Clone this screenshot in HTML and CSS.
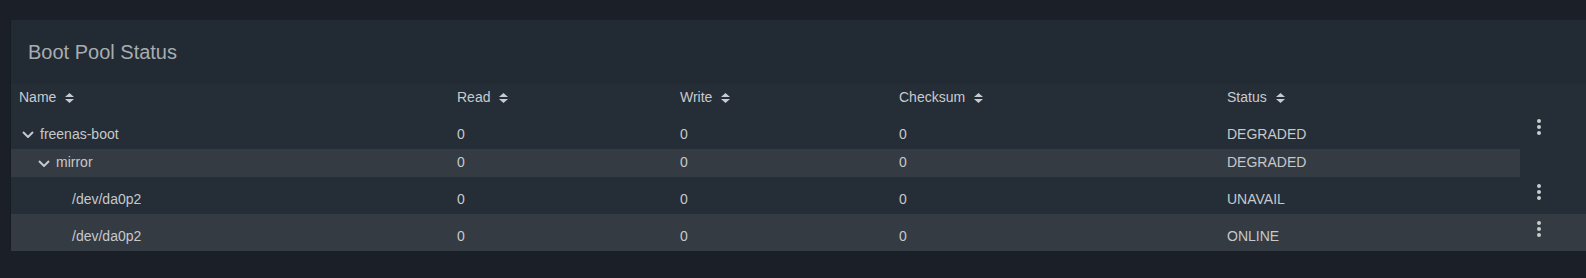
FILE: index.html
```html
<!DOCTYPE html>
<html>
<head>
<meta charset="utf-8">
<title>Boot Pool Status</title>
<link rel="stylesheet" href="styles.css">
</head>
<body>
<div class="page">
	<div class="card">
		<div class="card-title">
			<h3>Boot Pool Status</h3>
		</div>
		<div class="pool-table">
			<div class="row head">
				<div class="cell">Name <svg class="sort" viewBox="0 0 9 10"><polygon points="0,4 4.5,0 9,4"/><polygon points="0,6 4.5,10 9,6"/></svg></div>
				<div class="cell">Read <svg class="sort" viewBox="0 0 9 10"><polygon points="0,4 4.5,0 9,4"/><polygon points="0,6 4.5,10 9,6"/></svg></div>
				<div class="cell">Write <svg class="sort" viewBox="0 0 9 10"><polygon points="0,4 4.5,0 9,4"/><polygon points="0,6 4.5,10 9,6"/></svg></div>
				<div class="cell">Checksum <svg class="sort" viewBox="0 0 9 10"><polygon points="0,4 4.5,0 9,4"/><polygon points="0,6 4.5,10 9,6"/></svg></div>
				<div class="cell">Status <svg class="sort" viewBox="0 0 9 10"><polygon points="0,4 4.5,0 9,4"/><polygon points="0,6 4.5,10 9,6"/></svg></div>
				<div class="cell actions"></div>
			</div>

			<div class="row tall">
				<div class="cell name lvl-0"><span class="toggle"><svg viewBox="0 0 12 7"><polyline points="1,1 6,6 11,1"/></svg></span>freenas-boot</div>
				<div class="cell">0</div>
				<div class="cell">0</div>
				<div class="cell">0</div>
				<div class="cell">DEGRADED</div>
				<div class="cell actions"><svg class="more" viewBox="0 0 4 16"><circle cx="2" cy="2" r="2"/><circle cx="2" cy="8" r="2"/><circle cx="2" cy="14" r="2"/></svg></div>
			</div>

			<div class="row alt short">
				<div class="cell name lvl-1"><span class="toggle"><svg viewBox="0 0 12 7"><polyline points="1,1 6,6 11,1"/></svg></span>mirror</div>
				<div class="cell">0</div>
				<div class="cell">0</div>
				<div class="cell">0</div>
				<div class="cell">DEGRADED</div>
				<div class="cell actions empty"></div>
			</div>

			<div class="row tall">
				<div class="cell name lvl-2"><span class="toggle"></span>/dev/da0p2</div>
				<div class="cell">0</div>
				<div class="cell">0</div>
				<div class="cell">0</div>
				<div class="cell">UNAVAIL</div>
				<div class="cell actions"><svg class="more" viewBox="0 0 4 16"><circle cx="2" cy="2" r="2"/><circle cx="2" cy="8" r="2"/><circle cx="2" cy="14" r="2"/></svg></div>
			</div>

			<div class="row alt tall">
				<div class="cell name lvl-2"><span class="toggle"></span>/dev/da0p2</div>
				<div class="cell">0</div>
				<div class="cell">0</div>
				<div class="cell">0</div>
				<div class="cell">ONLINE</div>
				<div class="cell actions"><svg class="more" viewBox="0 0 4 16"><circle cx="2" cy="2" r="2"/><circle cx="2" cy="8" r="2"/><circle cx="2" cy="14" r="2"/></svg></div>
			</div>
		</div>
	</div>
</div>
</body>
</html>
```

FILE: styles.css
```css
html, body {margin: 0; padding: 0;}
body {
	background: #1b2028;
	font: 14px "Liberation Sans", Arial, sans-serif;
	color: #c6c9cc;
	overflow: hidden;
}

.page {
	padding: 20px 0 0 11px;
}

.card {
	width: 1600px;
	background: #252d36;
	box-shadow: 0 1px 2px rgba(0, 0, 0, .35);
}

.card-title {
	background: #222a33;
	padding: 20px 17px;
}

.card-title h3 {
	margin: 0;
	font-size: 20px;
	font-weight: normal;
	line-height: 24px;
	color: #a9adb0;
}

.pool-table .row {
	display: grid;
	grid-template-columns: 438px 223px 219px 328px 301px 1fr;
	line-height: 16px;
}

.pool-table .cell {
	padding-left: 8px;
	white-space: nowrap;
}

/* header */
.row.head {
	height: 28px;
	align-items: center;
	color: #c8cbcf;
}

.row.head .cell {
	padding-bottom: 2px;
}

.sort {
	width: 9px;
	height: 10px;
	margin-left: 5px;
	vertical-align: -1px;
	fill: #c8cbcf;
}

/* body rows */
.row.tall {
	height: 37px;
}

.row.tall .cell {
	padding-top: 14px;
}

.row.tall .cell.actions {
	padding-top: 7px;
	padding-left: 17px;
}

.row.short {
	height: 28px;
	align-items: center;
}

.row.short .cell {
	padding-bottom: 2px;
	height: 26px;
	line-height: 26px;
}

.row.alt .cell {
	background: #353b42;
}

.row.alt .cell.empty {
	background: none;
}

.cell.name {
	display: flex;
}

.toggle {
	width: 21px;
	flex: none;
}

.toggle svg {
	width: 12px;
	height: 7px;
	margin: 0 0 0 3px;
	fill: none;
	stroke: #c6c9cc;
	stroke-width: 2;
}

.row.tall .toggle svg {
	vertical-align: 1px;
}

.row.short .toggle svg {
	vertical-align: 0;
}

.lvl-1 {padding-left: 24px !important;}
.lvl-2 {padding-left: 40px !important;}

.more {
	display: block;
	width: 4px;
	height: 16px;
	fill: #c9cbcd;
}
```
